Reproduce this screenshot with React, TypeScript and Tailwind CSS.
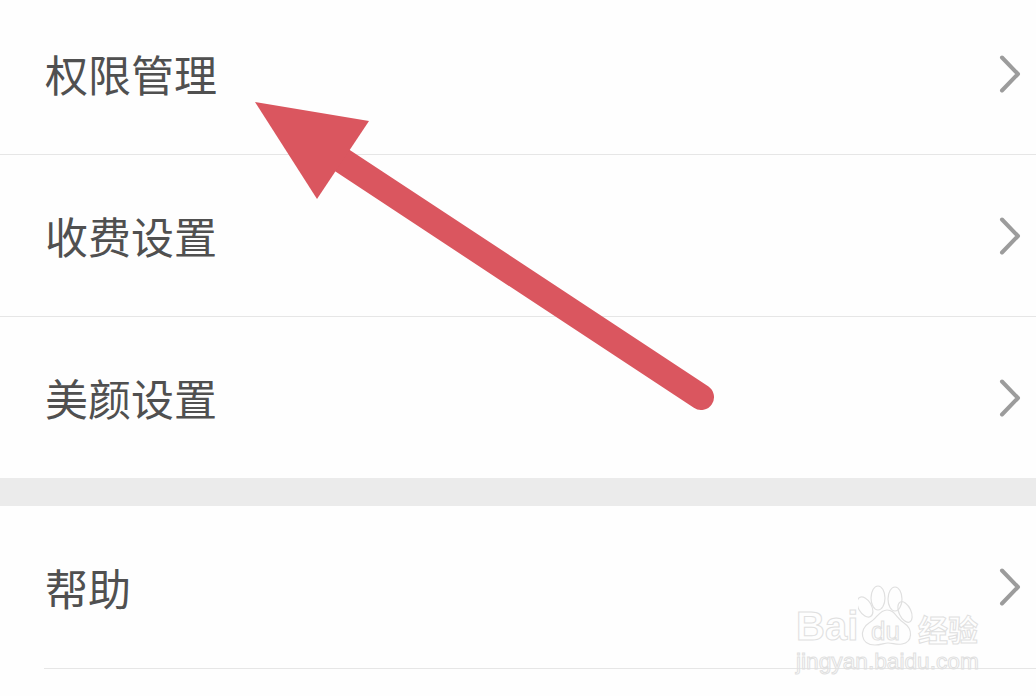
import React from 'react';

const Chevron = () => (
  <svg width="24" height="40" viewBox="0 0 24 40" fill="none" className="shrink-0">
    <path d="M4 3.5 L20 20 L4 36.5" stroke="#9c9c9c" strokeWidth="4" strokeLinecap="round" strokeLinejoin="round" />
  </svg>
);

const Row: React.FC<{ label: string; className: string }> = ({ label, className }) => (
  <div className={`flex items-center justify-between pl-[45px] pr-[14px] ${className}`}>
    <span className="text-[43px] leading-none text-[#505050]">{label}</span>
    <Chevron />
  </div>
);

const Arrow = () => (
  <svg width="1036" height="696" viewBox="0 0 1036 696" fill="none" className="absolute left-0 top-0">
    <path d="M343 161 L701 397" stroke="#da565f" strokeWidth="26" strokeLinecap="round" />
    <path d="M255 102 L369 121 L317 199 Z" fill="#da565f" />
  </svg>
);

const Watermark = () => (
  <div className="absolute left-[796px] top-[584px] flex flex-col text-transparent [-webkit-text-stroke:1px_#e0e0e0] font-['Liberation_Sans','Noto_Sans_CJK_SC',sans-serif]">
    <div className="flex items-end h-[66px]">
      <span className="w-[62px] mb-[4px] text-[40px] leading-none font-bold">Bai</span>
      <div className="relative w-[60px] h-[66px]">
        <svg width="60" height="66" viewBox="0 0 60 66" fill="none" stroke="#e0e0e0" strokeWidth="1.2">
          <ellipse cx="7" cy="23" rx="6.5" ry="11" transform="rotate(-30 7 23)" />
          <ellipse cx="20" cy="14" rx="7" ry="12" />
          <ellipse cx="37" cy="15" rx="7" ry="12" />
          <ellipse cx="47" cy="28" rx="6" ry="11" transform="rotate(-25 47 28)" />
          <path d="M29 26 C21 26 19 35 11 39 C1 45 2 61 17 61 C23 61 26 59 30 59 C35 59 38 61 44 60 C55 58 55 45 46 39 C38 34 37 26 29 26 Z" />
        </svg>
        <span className="absolute left-[13px] top-[34px] text-[26px] leading-none">du</span>
      </div>
      <span className="mb-[7px] text-[30px] leading-none font-bold font-['Noto_Sans_CJK_SC',sans-serif]">经验</span>
    </div>
    <span className="text-[22.7px] leading-none whitespace-nowrap">jingyan.baidu.com</span>
  </div>
);

export default function App() {
  return (
    <div className="relative w-[1036px] h-[696px] overflow-hidden bg-[#fefefe] font-['Noto_Sans_CJK_SC',sans-serif]">
      <Row label="权限管理" className="h-[155px] pb-[7px] border-b border-[#e6e6e6]" />
      <Row label="收费设置" className="h-[162px] border-b border-[#e6e6e6]" />
      <Row label="美颜设置" className="h-[161px]" />
      <div className="h-[28px] bg-[#ebebeb]" />
      <div className="h-[163px] ml-[44px] border-b border-[#e6e6e6]">
        <Row label="帮助" className="h-[162px] -ml-[44px]" />
      </div>
      <Arrow />
      <Watermark />
    </div>
  );
}
